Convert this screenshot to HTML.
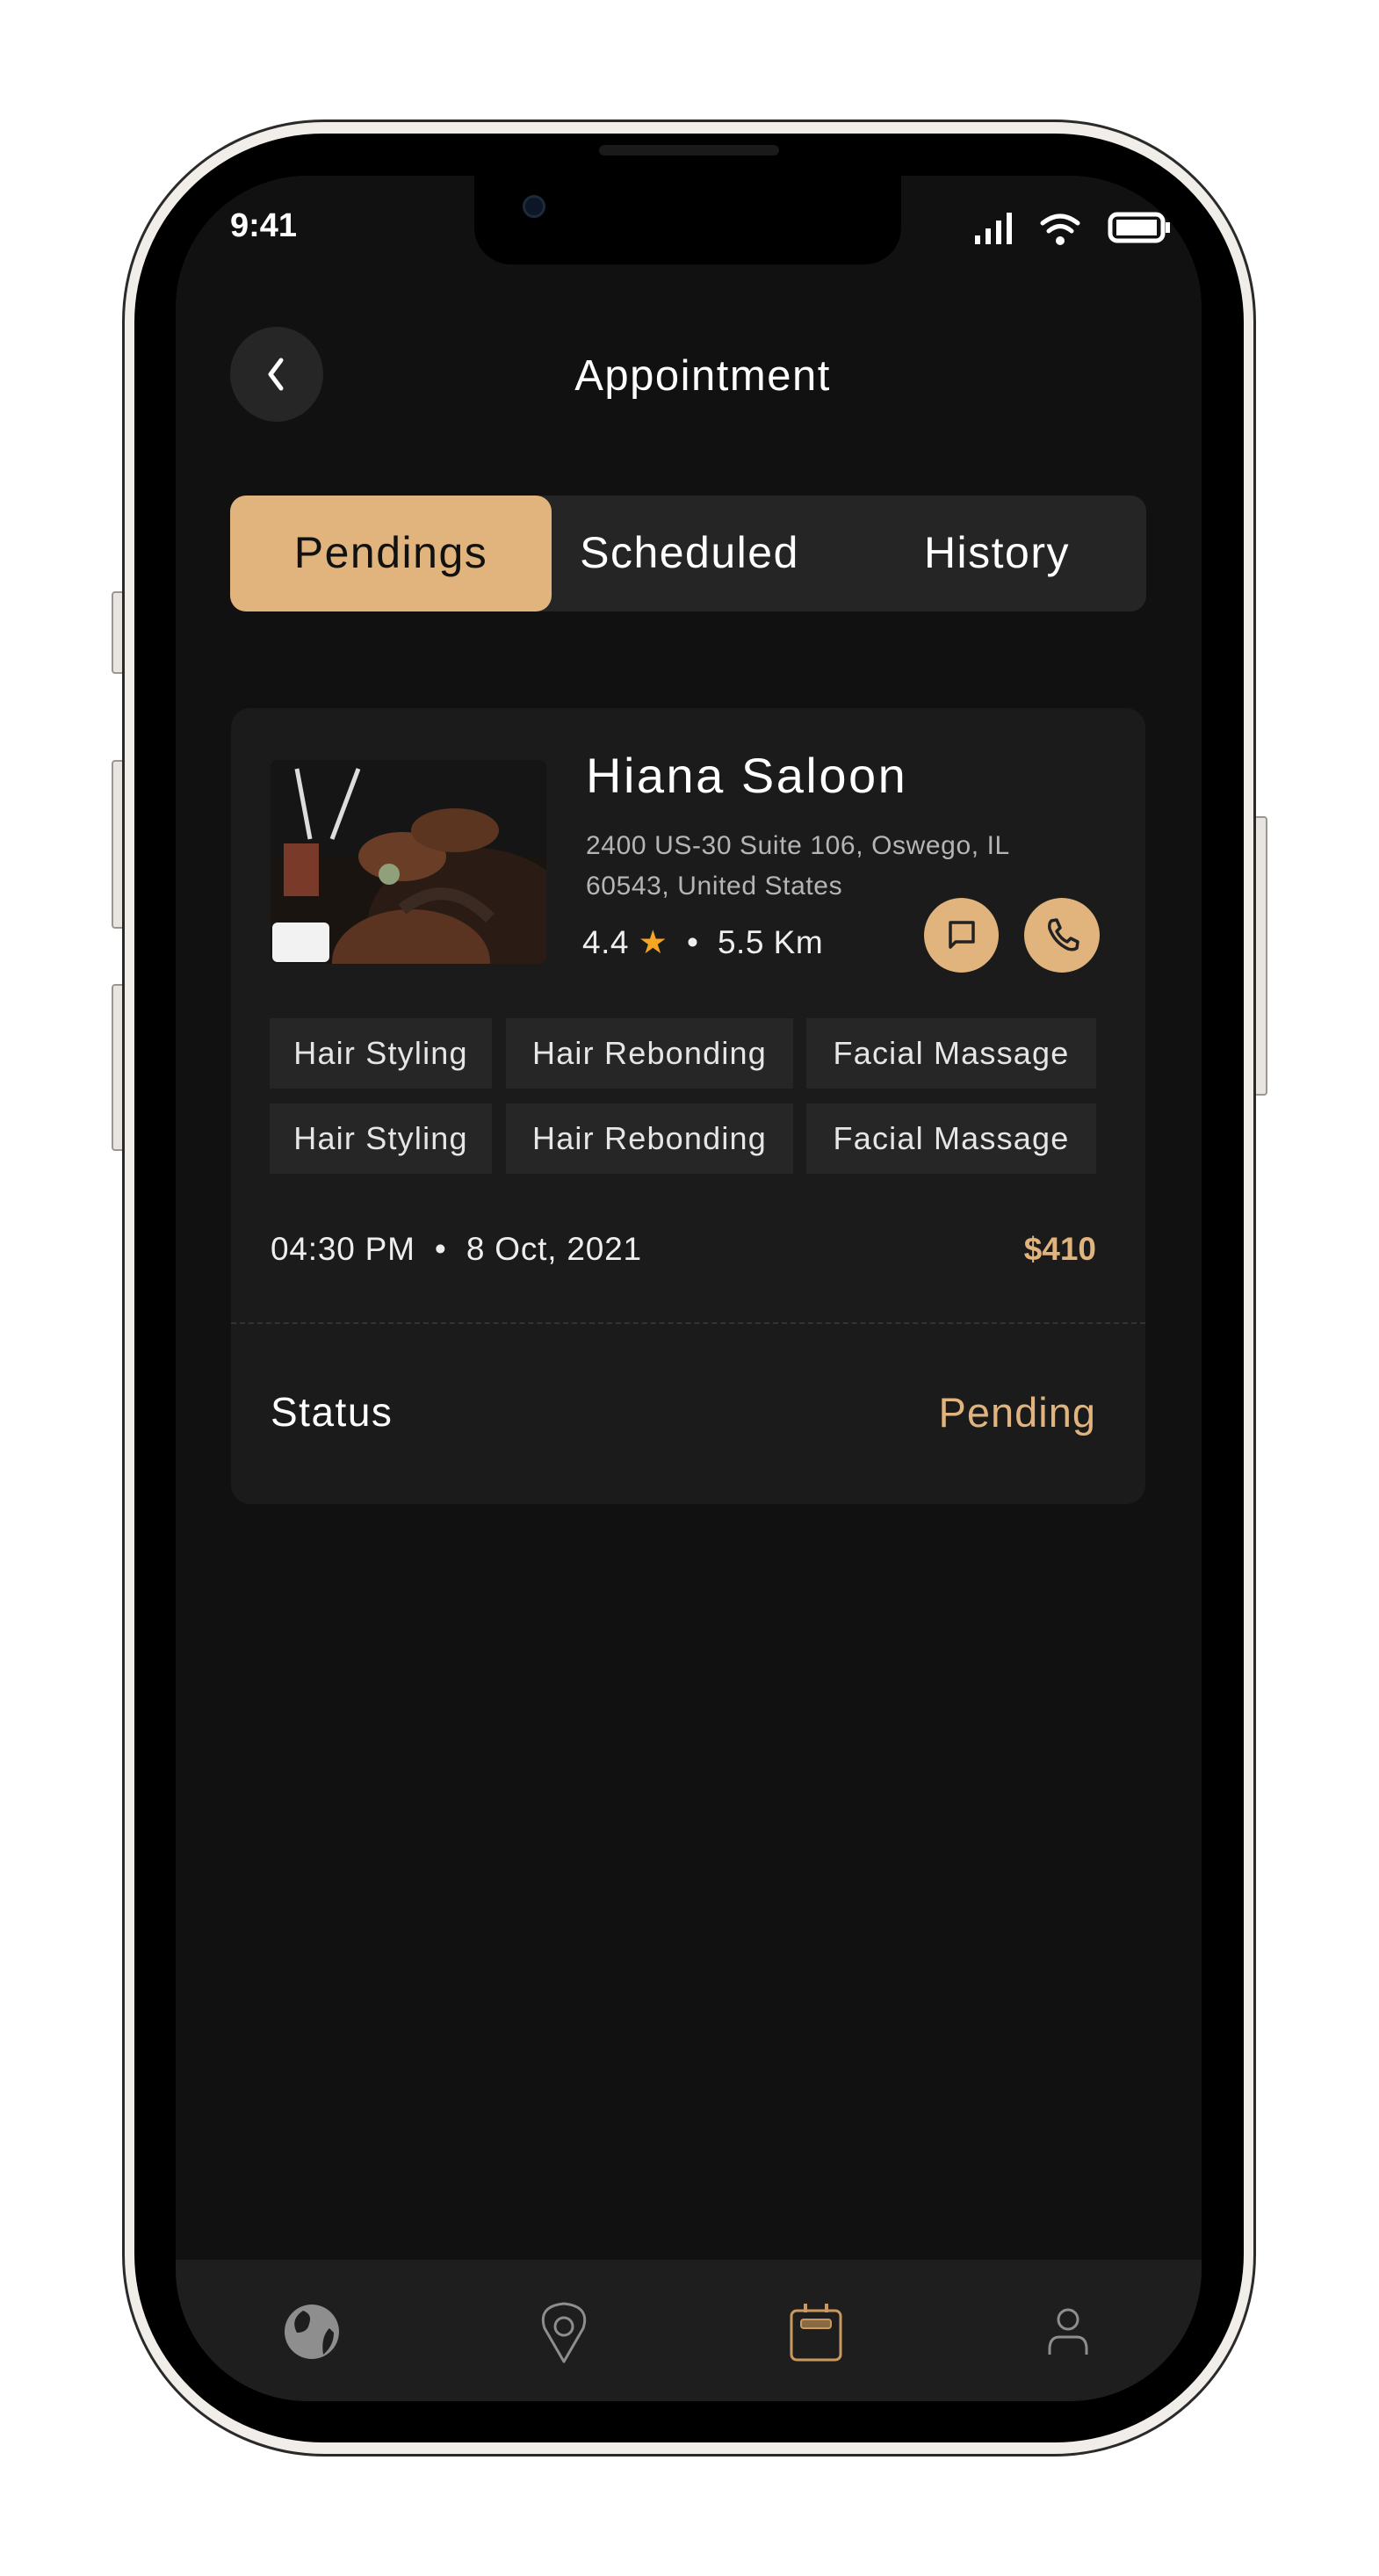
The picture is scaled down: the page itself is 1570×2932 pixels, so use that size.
<!DOCTYPE html>
<html><head><meta charset="utf-8"><style>
*{margin:0;padding:0;box-sizing:border-box}
body{width:1570px;height:2932px;background:#fff;position:relative;overflow:hidden;font-family:"Liberation Sans",sans-serif}
.a{position:absolute}
.btn{position:absolute;background:#e8e5e0;border:2px solid #9a9793;border-radius:4px}
.tag{position:absolute;background:#262626;color:#e6e6e6;font-size:36px;letter-spacing:1.2px;display:flex;align-items:center;justify-content:center;height:80px}
</style></head><body>
<div class="btn" style="left:127px;top:673px;width:16px;height:94px"></div>
<div class="btn" style="left:127px;top:865px;width:16px;height:192px"></div>
<div class="btn" style="left:127px;top:1120px;width:16px;height:190px"></div>
<div class="btn" style="left:1427px;top:929px;width:16px;height:318px"></div>
<div class="a" style="left:139px;top:136px;width:1291px;height:2660px;border-radius:230px;background:#f1eee9;border:3px solid #2a2a2a"></div>
<div class="a" style="left:153px;top:152px;width:1263px;height:2628px;border-radius:215px;background:#000"></div>
<div class="a" style="left:200px;top:200px;width:1168px;height:2533px;border-radius:150px;background:#111;overflow:hidden">
  <div class="a" style="left:0;top:2372px;width:1168px;height:161px;background:#1e1e1e"></div>
</div>
<div class="a" style="left:682px;top:165px;width:205px;height:12px;border-radius:6px;background:#1a1a1a"></div>
<div class="a" style="left:540px;top:195px;width:486px;height:106px;border-radius:0 0 42px 42px;background:#000"></div>
<div class="a" style="left:595px;top:222px;width:26px;height:26px;border-radius:50%;background:#0d1626;border:3px solid #1d2a3a"></div>
<div class="a" style="left:262px;top:236px;color:#fff;font-weight:bold;font-size:38px">9:41</div>
<svg class="a" style="left:1105px;top:236px" width="240" height="50" viewBox="0 0 240 50">
 <g fill="#fff"><rect x="5" y="32" width="6" height="10"/><rect x="17" y="24" width="6" height="18"/><rect x="29" y="15" width="6" height="27"/><rect x="41" y="6" width="6" height="36"/>
 <circle cx="102" cy="38" r="5"/></g>
 <g fill="none" stroke="#fff" stroke-width="5" stroke-linecap="round"><path d="M82 18 Q102 2 122 18"/><path d="M89 27 Q102 16 115 27"/>
 <rect x="159" y="8" width="60" height="30" rx="8"/></g>
 <rect x="166" y="14" width="46" height="18" fill="#fff"/><rect x="222" y="17" width="5" height="12" fill="#fff"/>
</svg>
<div class="a" style="left:262px;top:372px;width:106px;height:108px;border-radius:50%;background:#262626"></div>
<svg class="a" style="left:296px;top:402px" width="40" height="50"><path d="M24 8 L12 24 L24 40" fill="none" stroke="#fff" stroke-width="5" stroke-linecap="round" stroke-linejoin="round"/></svg>
<div class="a" style="left:500px;top:400px;width:600px;text-align:center;color:#fff;font-size:49px;letter-spacing:1.5px">Appointment</div>
<div class="a" style="left:262px;top:564px;width:1043px;height:132px;border-radius:18px;background:#252525"></div>
<div class="a" style="left:262px;top:564px;width:366px;height:132px;border-radius:18px;background:#e0b47c"></div>
<div class="a" style="left:262px;top:600px;width:366px;text-align:center;color:#111;font-size:50px;letter-spacing:1.5px">Pendings</div>
<div class="a" style="left:640px;top:600px;width:290px;text-align:center;color:#fff;font-size:50px;letter-spacing:1.5px">Scheduled</div>
<div class="a" style="left:1000px;top:600px;width:270px;text-align:center;color:#fff;font-size:50px;letter-spacing:1.5px">History</div>
<div class="a" style="left:263px;top:806px;width:1041px;height:906px;border-radius:22px;background:#1b1b1b;overflow:hidden">
  <div class="a" style="left:0;top:699px;width:1041px;border-top:2px dashed #333"></div>
</div>
<svg class="a" style="left:308px;top:865px;border-radius:8px" width="314" height="232" viewBox="0 0 314 232">
 <rect width="314" height="232" fill="#1a1411"/>
 <rect x="0" y="0" width="314" height="110" fill="#151515"/>
 <ellipse cx="230" cy="190" rx="120" ry="90" fill="#2a1c14"/>
 <ellipse cx="160" cy="230" rx="90" ry="60" fill="#5a3420"/>
 <ellipse cx="150" cy="110" rx="50" ry="28" fill="#6a3e26"/>
 <ellipse cx="210" cy="80" rx="50" ry="25" fill="#5c3521"/>
 <rect x="15" y="95" width="40" height="60" fill="#7a3a2a"/>
 <circle cx="135" cy="130" r="12" fill="#8fa07a"/>
 <path d="M30 10 L45 90 M100 10 L70 90" stroke="#ddd" stroke-width="5"/>
 <rect x="2" y="185" width="65" height="45" rx="6" fill="#f2f2f2"/>
 <path d="M150 170 Q200 130 250 180" stroke="#3a2a22" stroke-width="14" fill="none"/>
</svg>
<div class="a" style="left:667px;top:850px;color:#fff;font-size:56px;letter-spacing:2.5px">Hiana Saloon</div>
<div class="a" style="left:667px;top:940px;color:#b5b5b5;font-size:30px;line-height:46px;letter-spacing:0.6px">2400 US-30 Suite 106, Oswego, IL<br>60543, United States</div>
<div class="a" style="left:663px;top:1051px;color:#eee;font-size:37px;letter-spacing:0.5px">4.4 <span style="color:#f5a623">★</span> &nbsp;•&nbsp; 5.5 Km</div>
<div class="a" style="left:1052px;top:1022px;width:85px;height:85px;border-radius:50%;background:#e0b47c"></div>
<svg class="a" style="left:1052px;top:1022px" width="85" height="85"><path d="M30 28 H56 V50 H36 L30 56 Z" fill="none" stroke="#222" stroke-width="3.5" stroke-linejoin="round"/></svg>
<div class="a" style="left:1166px;top:1022px;width:86px;height:85px;border-radius:50%;background:#e0b47c"></div>
<svg class="a" style="left:1166px;top:1022px" width="86" height="85"><path d="M31 26 L37 25 L41 34 L37 38 Q42 47 49 50 L53 46 L61 50 L60 57 Q56 60 50 58 Q35 51 29 35 Q28 29 31 26 Z" fill="none" stroke="#222" stroke-width="3.5" stroke-linejoin="round"/></svg>
<div class="tag" style="left:307px;top:1159px;width:253px">Hair Styling</div>
<div class="tag" style="left:576px;top:1159px;width:327px">Hair Rebonding</div>
<div class="tag" style="left:918px;top:1159px;width:330px">Facial Massage</div>
<div class="tag" style="left:307px;top:1256px;width:253px">Hair Styling</div>
<div class="tag" style="left:576px;top:1256px;width:327px">Hair Rebonding</div>
<div class="tag" style="left:918px;top:1256px;width:330px">Facial Massage</div>
<div class="a" style="left:308px;top:1401px;color:#eee;font-size:37px;letter-spacing:0.8px">04:30 PM &nbsp;•&nbsp; 8 Oct, 2021</div>
<div class="a" style="left:1048px;top:1401px;width:200px;text-align:right;color:#e0b47c;font-size:37px;font-weight:bold">$410</div>
<div class="a" style="left:308px;top:1580px;color:#fff;font-size:46px;letter-spacing:1.5px">Status</div>
<div class="a" style="left:948px;top:1580px;width:300px;text-align:right;color:#e0b47c;font-size:47px;letter-spacing:1px">Pending</div>
<svg class="a" style="left:300px;top:2600px" width="980" height="110" viewBox="300 2600 980 110">
 <circle cx="355" cy="2654" r="31" fill="#8e8e8e"/>
 <path d="M345 2630 Q330 2640 338 2655 Q350 2655 352 2645 Q356 2634 345 2630Z M375 2650 Q365 2660 368 2680 Q380 2670 380 2655Z" fill="#1e1e1e"/>
 <path d="M642 2688 L620 2650 Q612 2625 642 2622 Q672 2625 664 2650 Z" fill="none" stroke="#8e8e8e" stroke-width="3" stroke-linejoin="round"/>
 <circle cx="642" cy="2648" r="10" fill="none" stroke="#8e8e8e" stroke-width="3"/>
 <rect x="901" y="2630" width="56" height="56" rx="6" fill="none" stroke="#c9995e" stroke-width="3"/>
 <rect x="912" y="2640" width="34" height="10" rx="3" fill="#8a6a44" stroke="#c9995e" stroke-width="2"/>
 <path d="M917 2632 V2622 M941 2632 V2622" stroke="#c9995e" stroke-width="4"/>
 <circle cx="1216" cy="2640" r="11" fill="none" stroke="#8e8e8e" stroke-width="3"/>
 <path d="M1195 2680 V2672 Q1196 2660 1206 2660 H1226 Q1236 2660 1237 2672 V2680" fill="none" stroke="#8e8e8e" stroke-width="3"/>
</svg>
</body></html>
